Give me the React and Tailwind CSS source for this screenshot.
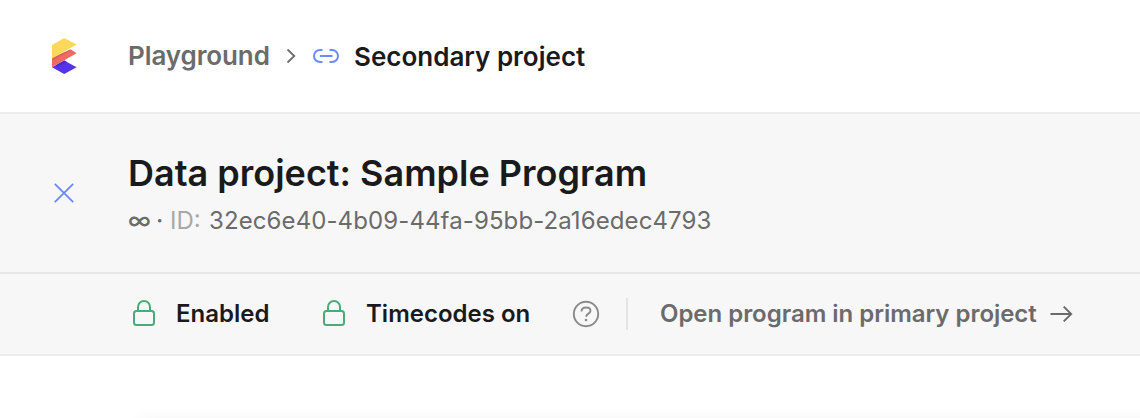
import React from "react";

function Logo() {
  return (
    <svg className="h-[36px] w-[26px] shrink-0" viewBox="0 0 26 36">
      <path d="M0 29.200 12.200 22.500 24.600 29.200 12.200 36Z" fill="#5433e8" />
      <path d="M4 27 12.200 22.500 15 24 5 29Z" fill="#4a2bcc" />
      <path d="M0 20 19 11.500 24.600 15.200 0 29.200Z" fill="#ef6a60" />
      <path d="M0 20 18 11.500 19.500 12.200 0 23Z" fill="#e0605a" />
      <path d="M0 7 12.200 0 24.600 6.600 0 20.500Z" fill="#f9d85a" />
    </svg>
  );
}

function Lock() {
  return (
    <svg className="h-[28px] w-[24px] shrink-0" viewBox="0 0 24 28" fill="none" stroke="#4aab78" strokeWidth="2">
      <rect x="2" y="11" width="20" height="14" rx="2.5" />
      <path d="M6 11V7a6 6 0 0 1 12 0v4" />
    </svg>
  );
}

export default function App() {
  return (
    <div className="h-[418px] w-[1140px] overflow-hidden bg-white font-['Inter',sans-serif] text-[#1a1a1c]">
      <header className="flex h-[114px] items-center border-b-2 border-[#ededed] pl-[52px]">
        <Logo />
        <span className="ml-[50px] w-[142px] text-[26px] leading-8 font-semibold tracking-[-0.1px] whitespace-nowrap text-[#6b6b6b]">Playground</span>
        <svg className="ml-[16px] h-[16px] w-[12px] shrink-0" viewBox="0 0 12 16" fill="none" stroke="#6b6b6b" strokeWidth="1.8">
          <path d="m1.500 1.500 6.800 6.500-6.800 6.500" />
        </svg>
        <svg className="ml-[14px] h-[16px] w-[28px] shrink-0" viewBox="0 0 28 16" fill="none" stroke="#6d89ff" strokeWidth="2">
          <path d="M10.500 2H8a6 6 0 0 0 0 12h2.500M17.500 2h2.500a6 6 0 0 1 0 12h-2.500M8 8h12.500" />
        </svg>
        <span className="mt-[2px] ml-[14px] text-[26px] leading-8 font-semibold whitespace-nowrap">Secondary project</span>
      </header>
      <section className="flex h-[160px] items-center border-b-2 border-[#e6e6e6] bg-[#f7f7f7] pl-[54px]">
        <svg className="h-[20px] w-[20px] shrink-0" viewBox="0 0 20 20" fill="none" stroke="#6d89ff" strokeWidth="1.9">
          <path d="m.8.8 18.400 18.400M19.200.8.8 19.200" />
        </svg>
        <div className="ml-[54px] pt-[2px]">
          <h1 className="text-[36px] leading-[44px] font-semibold whitespace-nowrap">Data project: Sample Program</h1>
          <p className="mt-[10px] flex text-[24px] leading-8 whitespace-nowrap text-[#6b6b6b]">
            <span className="w-[28px] font-medium">∞</span>
            <span className="w-[14px] font-medium">·</span>
            <span className="w-[39px] text-[#a8a8a8]">ID:</span>
            <span className="tracking-[0.1px]">32ec6e40-4b09-44fa-95bb-2a16edec4793</span>
          </p>
        </div>
      </section>
      <section className="flex h-[82px] items-center border-b-2 border-[#ededed] bg-[#f7f7f7] pl-[132px] text-[24px] leading-8 font-semibold whitespace-nowrap">
        <Lock />
        <span className="ml-[20px] w-[96px]">Enabled</span>
        <span className="ml-[50px] flex"><Lock /></span>
        <span className="ml-[20px] w-[166px]">Timecodes on</span>
        <svg className="ml-[40px] h-[28px] w-[28px] shrink-0" viewBox="0 0 28 28" fill="none" stroke="#8a8a8a" strokeWidth="1.9">
          <circle cx="14" cy="14" r="12.200" />
          <path d="M9.500 11.500C9.500 9 11.200 7.500 14 7.500s4.500 1.300 4.500 3.300c0 3-4.300 2.600-4.300 5.900" />
          <circle cx="14" cy="20" r="1.300" fill="#8a8a8a" stroke="none" />
        </svg>
        <div className="ml-[26px] h-8 w-[2px] bg-[#e4e4e4]" />
        <a className="ml-[32px] flex items-center text-[#6b6b6b]">
          <span className="w-[377px] tracking-[-0.03px]">Open program in primary project</span>
          <svg className="ml-[13px] h-[16px] w-[23px]" viewBox="0 0 23 16" fill="none" stroke="#6b6b6b" strokeWidth="1.9">
            <path d="M.5 8h21M13.700 .6 21.200 8l-7.500 7.400" />
          </svg>
        </a>
      </section>
      <main className="h-[62px] overflow-hidden pt-[64px] pl-[138px]">
        <div className="h-20 w-[1100px] bg-white shadow-[0_0_16px_rgba(0,0,0,0.05)]" />
      </main>
    </div>
  );
}
